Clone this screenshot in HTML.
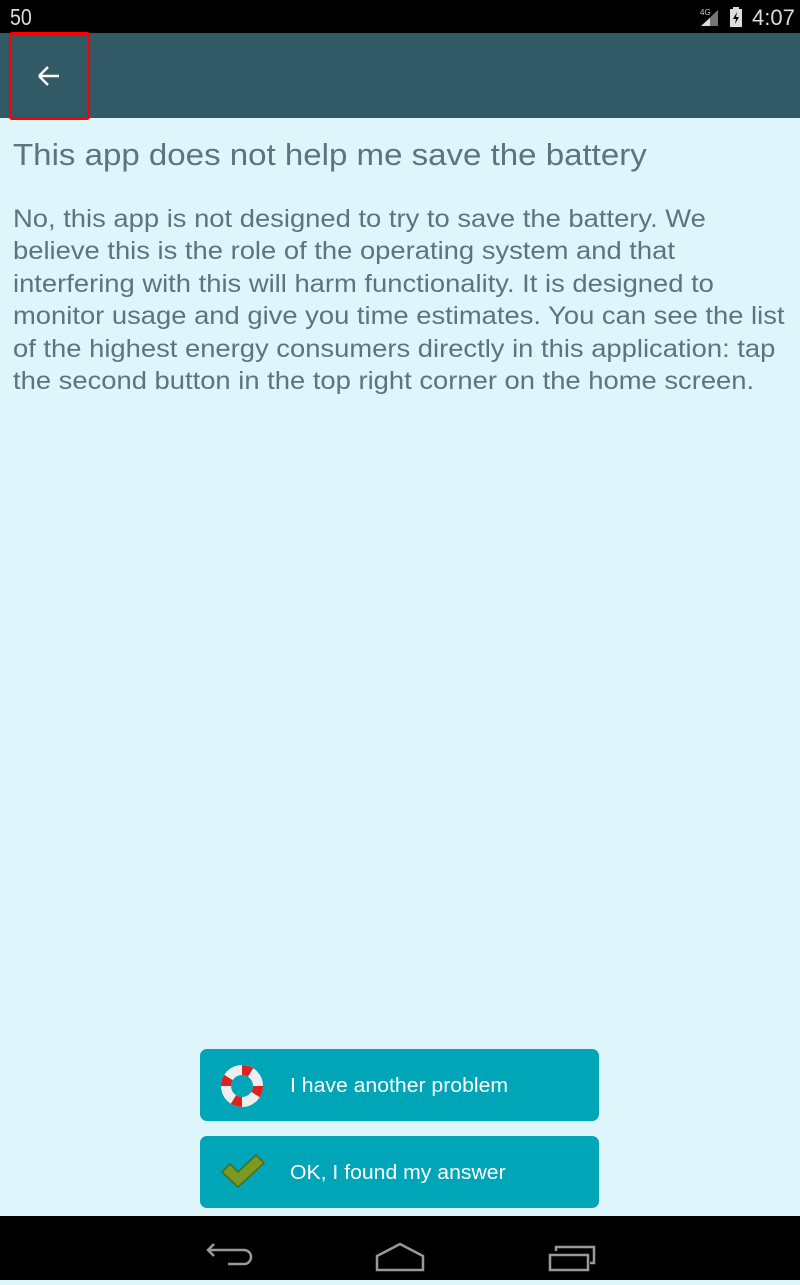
<!DOCTYPE html>
<html><head><style>
*{margin:0;padding:0;box-sizing:border-box}
body{width:800px;height:1280px;background:#dff5fc;font-family:"Liberation Sans",sans-serif;position:relative;overflow:hidden}
.sb{position:absolute;top:0;left:0;width:800px;height:33px;background:#000;color:#ddd}
.tb{position:absolute;top:33px;left:0;width:800px;height:85px;background:#325a66}
.hl{position:absolute;left:9px;top:32px;width:81px;height:88px;border:3px solid #f00;border-radius:3px}
h1{position:absolute;left:13px;top:137px;font-size:31px;font-weight:normal;color:#5e7380;white-space:nowrap;transform:scaleX(1.066);transform-origin:left}
.p{position:absolute;left:13px;top:203px;font-size:25px;line-height:32.4px;color:#5e7380;white-space:nowrap;transform:scaleX(1.095);transform-origin:left}
.btn{position:absolute;left:200px;width:399px;height:72px;background:#00a5b8;border-radius:7px;color:#fff;font-size:20px}
.btn span{position:absolute;left:90px;top:26px;transform:scaleX(1.06);transform-origin:left}
.nav{position:absolute;top:1216px;left:0;width:800px;height:64px;background:#000}
</style></head><body>
<div class="sb"><span style="position:absolute;left:10px;top:4px;font-size:23px;transform:scaleX(.85);transform-origin:left">50</span>
<svg style="position:absolute;left:700px;top:6px" width="50" height="22"><text x="0" y="9" font-size="8" fill="#ccc" font-family="Liberation Sans">4G</text><polygon points="1,20 18,4 18,20" fill="#777"/><polygon points="1,20 10,12 10,20" fill="#ddd"/><rect x="30" y="3" width="12" height="18" fill="#ddd"/><rect x="33" y="1" width="6" height="3" fill="#ddd"/><polygon points="37,6 33,13 36,13 35,18 39,11 36,11" fill="#000"/></svg>
<span style="position:absolute;left:752px;top:5px;font-size:22px">4:07</span></div>
<div class="tb"><svg style="position:absolute;left:36px;top:31px" width="26" height="24"><path d="M3 12H23M3 12L12 3M3 12L12 21" stroke="#fff" stroke-width="2.4" fill="none"/></svg></div>
<div class="hl"></div>
<h1>This app does not help me save the battery</h1>
<div class="p">No, this app is not designed to try to save the battery. We<br>believe this is the role of the operating system and that<br>interfering with this will harm functionality. It is designed to<br>monitor usage and give you time estimates. You can see the list<br>of the highest energy consumers directly in this application: tap<br>the second button in the top right corner on the home screen.</div>
<div class="btn" style="top:1049px"><svg style="position:absolute;left:20px;top:15px" width="44" height="44"><circle cx="22" cy="22" r="16" fill="none" stroke="#eee" stroke-width="10"/><circle cx="22" cy="22" r="16" fill="none" stroke="#d22" stroke-width="10" stroke-dasharray="9 16.1"/></svg><span>I have another problem</span></div>
<div class="btn" style="top:1136px"><svg style="position:absolute;left:20px;top:18px" width="46" height="36"><polygon points="2,18 10,10 18,18 36,1 44,9 18,33" fill="#7a9a24" stroke="#4d6a10" stroke-width="1.5"/></svg><span>OK, I found my answer</span></div>
<div class="nav"><svg width="800" height="64">
<path d="M214 28L208 34L214 40M208 34H244A7 7 0 0 1 244 48H228" stroke="#999" stroke-width="2.5" fill="none"/>
<path d="M377 40L400 28L423 40V54H377Z" stroke="#999" stroke-width="2.5" fill="none"/>
<rect x="550" y="39" width="38" height="15" stroke="#999" stroke-width="2.5" fill="none"/><path d="M556 35V31H594V47H590" stroke="#999" stroke-width="2.5" fill="none"/>
</svg></div>
</body></html>
